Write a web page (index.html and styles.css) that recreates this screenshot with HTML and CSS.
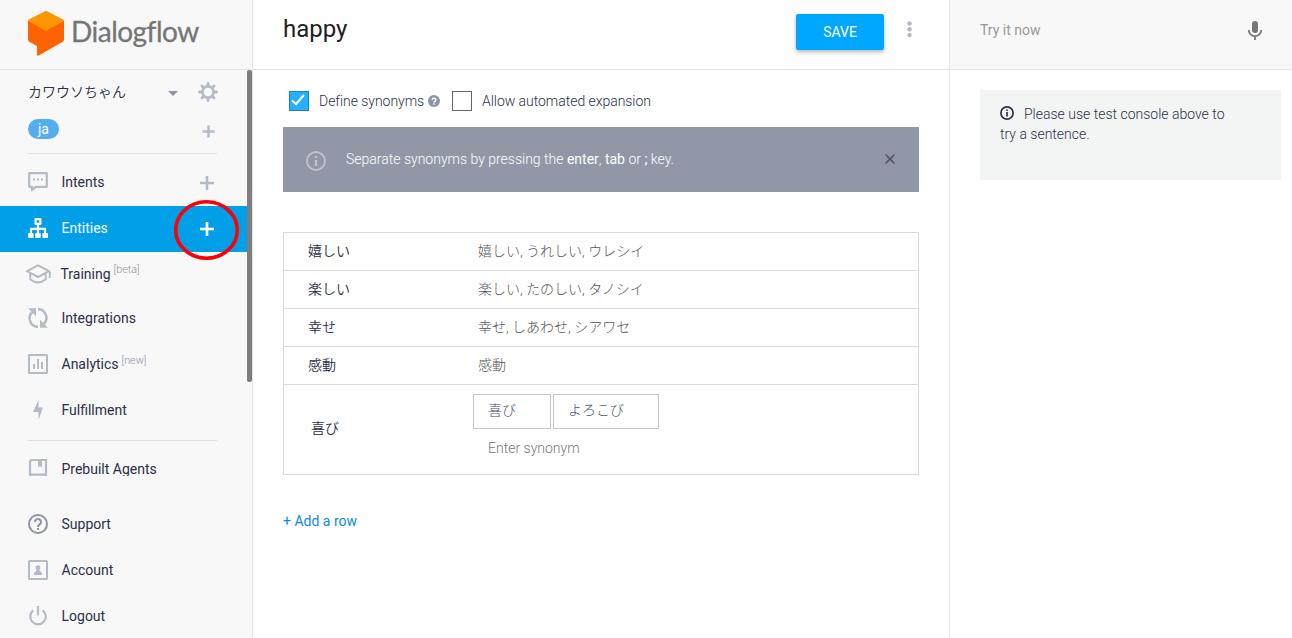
FILE: index.html
```html
<!DOCTYPE html>
<html lang="ja">
<head>
<meta charset="utf-8">
<title>Dialogflow</title>
<link rel="stylesheet" href="styles.css">
</head>
<body>
<div class="app">
  <aside class="sidebar">
    <header class="brand">
      <svg class="brand-mark" width="36" height="45" viewBox="0 0 36 45"><path fill="#ff6200" d="M0 9.500 18 19l18-9.500V28.500q0 1.500-1.300 2.300L11.200 44.300Q9 45.500 9 43.500V35L1.300 30.800Q0 30 0 28.500z"/><path fill="#ff9600" d="M0 9.600Q.3 8.900 1.300 8.300L16.600.4q1.400-.700 2.800 0L34.700 8.300q1 .6 1.300 1.300L18 20z"/></svg>
      <span class="brand-name">Dialogflow</span>
    </header>
    <div class="scroll">
      <div class="scroll-body">
        <div class="agent">
          <span class="agent-name">カワウソちゃん</span>
          <svg class="caret" width="10" height="5" viewBox="0 0 10 5"><path fill="#8e94a8" d="M0 0h10L5 5z"/></svg>
          <svg class="gear" width="20" height="20" viewBox="0 0 20 20" fill="none" stroke="#b4bac6"><circle cx="10" cy="10" r="5.600" stroke-width="2.600"/><g stroke-width="2.800" stroke-linecap="round"><path d="M10 1.400v2M10 16.600v2M1.400 10h2M16.600 10h2M3.900 3.900l1.400 1.400M14.700 14.700l1.400 1.400M3.900 16.100l1.400-1.400M14.700 5.300l1.400-1.400"/></g></svg>
        </div>
        <div class="lang">
          <span class="lang-tag">ja</span>
          <svg width="13" height="13" viewBox="0 0 13 13"><path d="M6.500.5v12M.5 6.500h12" stroke="#b4bac6" stroke-width="2.400"/></svg>
        </div>
        <nav class="menu">
          <a class="item"><svg class="icon" viewBox="0 0 20 20"><path d="M1.200 1.200h17.600v13.600H7.800L4 18.200v-3.400H1.200z" fill="none" stroke="#b4bac6" stroke-width="2.200" stroke-linejoin="round"/><path d="M5 6.500h2v2H5zm4 0h2v2H9zm4 0h2v2h-2z" fill="#b4bac6"/></svg><span>Intents</span><svg class="add" viewBox="0 0 14 14"><path d="M7 0v14M0 7h14" stroke="#b4bac6" stroke-width="2.600"/></svg></a>
          <a class="item active"><svg class="icon" viewBox="0 0 20 20"><path d="M7.600 1.200h4.800v4.600H7.600zM10 6v10M3 15.500v-4.600h14v4.600" fill="none" stroke="#fff" stroke-width="2.200" stroke-linejoin="round"/><rect y="15" width="5.600" height="5" rx="1" fill="#fff"/><rect x="7.200" y="15" width="5.600" height="5" rx="1" fill="#fff"/><rect x="14.400" y="15" width="5.600" height="5" rx="1" fill="#fff"/></svg><span>Entities</span><svg class="add" viewBox="0 0 14 14"><path d="M7 0v14M0 7h14" stroke="#fff" stroke-width="2.600"/></svg>
            <svg class="highlight" width="66" height="61" viewBox="0 0 66 61"><ellipse cx="32.500" cy="30" rx="30.800" ry="28.200" fill="none" stroke="#fb0007" stroke-width="3.600"/></svg></a>
          <a class="item training"><svg class="icon wide" viewBox="0 0 26 20"><path d="M2 7.200 13 1.400l11 5.800-11 5.800zM5.200 9.500v5.700q7.800 6.400 15.600 0V9.500M24.800 7.500V14" fill="none" stroke="#b4bac6" stroke-width="2" stroke-linejoin="round"/></svg><span>Training</span><small>[beta]</small></a>
          <a class="item"><svg class="icon" viewBox="0 0 20 20"><path d="M10 18.800A8.500 8.500 0 0 1 5 3.500M10 1.200a8.500 8.500 0 0 1 5 15.300" fill="none" stroke="#b4bac6" stroke-width="2.500"/><path d="M0 .2h8v8zM20 19.800h-8v-8z" fill="#b4bac6"/></svg><span>Integrations</span></a>
          <a class="item"><svg class="icon" viewBox="0 0 20 20"><rect x="1" y="1" width="18" height="18" rx=".6" fill="none" stroke="#b4bac6" stroke-width="2"/><path d="M5 10h2v5H5zm4-5h2v10H9zm4 3h2v7h-2z" fill="#b4bac6"/></svg><span>Analytics</span><small>[new]</small></a>
          <a class="item"><svg class="icon" viewBox="0 0 20 20"><path d="M10.500 0v7.500H15L10.500 20v-8H5z" fill="#b4bac6"/></svg><span>Fulfillment</span></a>
        </nav>
        <a class="item prebuilt"><svg class="icon" viewBox="0 0 20 20"><path d="M2 20V3.200Q2 1 4.200 1H18v19M2 15.700h16" fill="none" stroke="#b4bac6" stroke-width="2.200"/><path d="M10 2h4v6.500l-2-1.500-2 1.500z" fill="#b4bac6"/></svg><span>Prebuilt Agents</span></a>
      </div>
      <div class="scrollbar"></div>
    </div>
    <nav class="footer-menu">
      <a class="item"><svg class="icon" viewBox="0 0 20 20" fill="none" stroke="#8e94a8" stroke-width="2"><circle cx="10" cy="10" r="9"/><path d="M7 8a3 3 0 1 1 4.700 2.400Q10 11.600 10 13M10 14v2"/></svg><span>Support</span></a>
      <a class="item"><svg class="icon" viewBox="0 0 20 20"><rect x="1" y="1" width="18" height="18" rx=".6" fill="none" stroke="#b4bac6" stroke-width="2"/><path d="M10 5a2.500 2.500 0 0 1 1.600 4.400V11Q14 11.600 14 13.500V15H6v-1.500Q6 11.600 8.400 11V9.400A2.500 2.500 0 0 1 10 5z" fill="#b4bac6"/></svg><span>Account</span></a>
      <a class="item"><svg class="icon" viewBox="0 0 20 20" fill="none" stroke="#b4bac6" stroke-width="2.200"><path d="M10 0v9.500M5.300 4.300a7.800 7.800 0 1 0 9.400 0"/></svg><span>Logout</span></a>
    </nav>
  </aside>

  <main class="main">
    <header class="title-bar">
      <h1>happy</h1>
      <button class="save">SAVE</button>
      <svg class="more" width="5" height="17" viewBox="0 0 5 17" fill="#b4b7c4"><circle cx="2.500" cy="2.500" r="2.200"/><circle cx="2.500" cy="8.300" r="2.200"/><circle cx="2.500" cy="14.100" r="2.200"/></svg>
    </header>
    <section class="content">
      <div class="options">
        <span class="check checked"><svg width="14" height="12" viewBox="0 0 14 12"><path d="M1 6.500 5 10 13 1" fill="none" stroke="#fff" stroke-width="2"/></svg></span>
        <span class="label define">Define synonyms</span>
        <svg class="help" width="12" height="12" viewBox="0 0 12 12"><circle cx="6" cy="6" r="6" fill="#8e94a8"/><path d="M4.200 4.800a1.800 1.600 0 1 1 2.900 1.300Q6 6.700 6 7.500M6 8.300v1.500" fill="none" stroke="#fff" stroke-width="1.500"/></svg>
        <span class="check"></span>
        <span class="label">Allow automated expansion</span>
      </div>
      <div class="hint">
        <svg class="hint-icon" width="20" height="20" viewBox="0 0 20 20" fill="none" stroke="#bfc2ca" stroke-width="2"><circle cx="10" cy="10" r="9"/><path d="M10 5v2M10 9v6" stroke-width="2.400"/></svg>
        <p>Separate synonyms by pressing the <b>enter</b>, <b>tab</b> or <b>;</b> key.</p>
        <svg class="close" width="10" height="10" viewBox="0 0 10 10"><path d="m.6.6 8.800 8.800M9.400.6.6 9.400" stroke="#52565e" stroke-width="1.500"/></svg>
      </div>
      <div class="table">
        <div class="row"><span class="key">嬉しい</span><span class="value">嬉しい, うれしい, ウレシイ</span></div>
        <div class="row"><span class="key">楽しい</span><span class="value">楽しい, たのしい, タノシイ</span></div>
        <div class="row"><span class="key">幸せ</span><span class="value">幸せ, しあわせ, シアワセ</span></div>
        <div class="row"><span class="key">感動</span><span class="value">感動</span></div>
        <div class="row editing">
          <span class="key">喜び</span>
          <div class="editor">
            <div class="chips"><span class="chip">喜び</span><span class="chip">よろこび</span></div>
            <span class="placeholder">Enter synonym</span>
          </div>
        </div>
      </div>
      <a class="add-row">+ Add a row</a>
    </section>
  </main>

  <aside class="console">
    <header class="try">
      <span>Try it now</span>
      <svg width="14" height="19" viewBox="0 0 14 19"><rect x="4" width="6" height="12" rx="3" fill="#757575"/><path d="M.8 9a6.200 6.200 0 0 0 12.400 0M7 15v4" fill="none" stroke="#757575" stroke-width="1.700"/></svg>
    </header>
    <div class="message">
      <p><svg width="14" height="14" viewBox="0 0 14 14" fill="none" stroke="#2b3047" stroke-width="1.700"><circle cx="7" cy="7" r="6.100"/><path d="M7 3.400v1.500M7 6v4.500"/></svg>Please use test console above to try a sentence.</p>
    </div>
  </aside>
</div>
</body>
</html>
```
FILE: styles.css
```css
* { box-sizing: border-box; }
body { margin: 0; background: #fff; color: #2b3047; font: 14px/20px Roboto, "Noto Sans CJK JP", sans-serif; }
svg { display: block; flex: none; }
p, h1 { margin: 0; }
.app { display: grid; grid-template-columns: 253px 697px 1fr; width: 1292px; height: 638px; overflow: hidden; }

.sidebar { display: flex; flex-direction: column; background: #f8f8f8; border-right: 1px solid #e5e5e5; height: 638px; overflow: hidden; }
.brand { flex: none; display: flex; height: 70px; padding: 11px 0 0 28px; border-bottom: 1px solid #e5e5e5; }
.brand-name { margin: 0 0 0 7px; font: 28px/40px Lato, sans-serif; color: #757575; letter-spacing: -.5px; -webkit-text-stroke: .3px #757575; }
.scroll { flex: none; display: flex; height: 406px; overflow: hidden; }
.scroll-body { width: 247px; }
.scrollbar { width: 5px; height: 312px; border-radius: 2px; background: #7d7d7d; }
.agent { display: flex; align-items: center; height: 44px; padding-left: 28px; }
.agent-name { width: 140px; margin-top: -1px; font-weight: 350; }
.caret { margin-top: 2px; }
.gear { margin-left: 20px; }
.lang { display: flex; justify-content: space-between; height: 40px; margin: 0 30px 0 28px; padding: 5px 2px 0 0; border-bottom: 1px solid #e2e2e2; }
.lang-tag { width: 31px; height: 20px; border-radius: 10px; background: #54adee; color: #fff; text-align: center; }
.lang svg { margin-top: 6px; }
.menu { margin: 6px 0; position: relative; }
.menu::after { content: ""; display: block; height: 1px; margin: 6px 30px 0 28px; background: #e2e2e2; }
.item { display: flex; align-items: center; height: 46px; padding: 0 33px 1px 28px; position: relative; }
.scroll .item { padding-bottom: 2px; }
.scroll .prebuilt { padding-bottom: 3px; }
.icon { width: 20px; height: 20px; margin-right: 13.500px; }
.icon.wide { width: 26px; margin: 0 9.500px 0 -3px; }
.item small { margin: -7px 0 0 3px; font-size: 10.800px; line-height: 16px; font-weight: 300; color: #8e94a8; }
.add { width: 14px; height: 14px; margin: 2px 0 0 auto; }
.active { background: #009fe8; color: #fff; }
.scroll .training { height: 44px; padding-bottom: 1px; }
.highlight { position: absolute; z-index: 1; left: 174px; top: -6px; }
.footer-menu { padding-top: 25px; }

.main { border-right: 1px solid #e5e5e5; }
.title-bar { display: flex; height: 70px; padding: 14px 37px 0 30px; border-bottom: 1px solid #e5e5e5; }
h1 { flex: 1; font-size: 24px; line-height: 30px; font-weight: 400; color: #212121; }
.save { width: 88px; height: 36px; border: 0; border-radius: 2px; background: #00a7ff; color: #fff; font: 14px Roboto, sans-serif; box-shadow: 0 2px 4px rgba(0,0,0,.3); }
.more { margin: 7px 0 0 23px; }
.content { padding: 21px 30px 0; }
.options { display: flex; align-items: center; height: 20px; padding-left: 6px; font-weight: 300; }
.check { display: flex; align-items: center; justify-content: center; width: 20px; height: 20px; border: 1px solid #666; }
.checked { border-color: #2083b0; background: #25b1ff; }
.checked svg { margin: -2px 2px 0 0; }
.label { margin-left: 10px; letter-spacing: -.04px; }
.define { width: 105px; white-space: nowrap; }
.help { margin: 0 12px 0 4px; }
.hint { display: flex; height: 65px; margin-top: 16px; padding: 0 24px 0 23px; background: #9297a8; color: #fff; font-weight: 300; }
.hint-icon { margin: 24px 20px 0 0; }
.hint p { flex: 1; padding-top: 22px; }
.hint b { font-weight: 400; }
.close { margin-top: 27px; }
.table { margin-top: 40px; border: 1px solid #dadada; font-weight: 300; }
.row { display: flex; align-items: center; height: 38px; padding: 0 0 2px 24px; border-bottom: 1px solid #dadada; }
.row:last-child { border-bottom: 0; }
.key { width: 170px; font-weight: 350; }
.value { color: #555; }
.editing { height: 89px; align-items: flex-start; padding-left: 27px; }
.editing .key { width: 162px; padding-top: 33px; }
.editor { padding-top: 9px; }
.chips { display: flex; gap: 2px; }
.chip { height: 35px; padding: 5px 34px 0 14px; border: 1px solid #c4c5ca; color: #464e6b; }
.placeholder { display: block; margin: 9px 0 0 15px; color: #777; }
.add-row { display: block; margin-top: 36px; color: #0f8ade; }

.try { display: flex; justify-content: space-between; height: 70px; padding: 20px 30px 0; background: #f8f8f8; border-bottom: 1px solid #e5e5e5; color: #999; }
.try svg { margin-top: 1px; }
.message { width: 301px; height: 90px; margin: 20px 0 0 30px; padding: 14px 50px 0 20px; background: #f3f5f5; font-weight: 300; }
.message svg { display: inline-block; margin-right: 10px; vertical-align: -1px; }
```
